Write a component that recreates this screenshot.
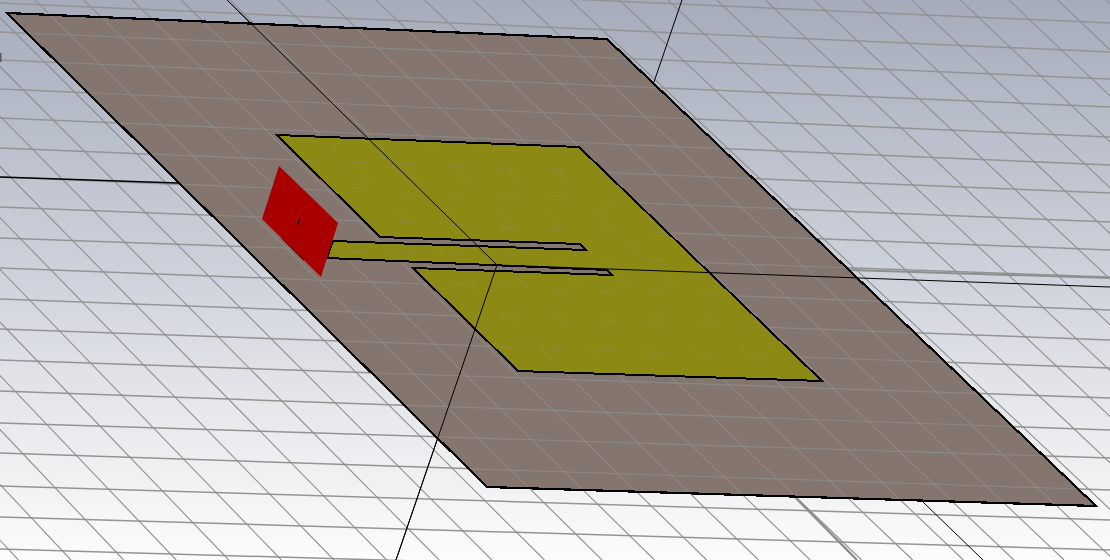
const W = 1110;
const H = 560;

const hAnchors: [number, number][] = [
  [-26, 23], [3, 52], [32, 79], [60, 107], [89, 137], [118, 165], [148, 193], [177, 222], [207, 250], [238, 277],
  [268, 310], [299, 340], [329, 368], [360, 398], [391, 430], [423, 458], [453, 490], [486, 520], [517, 550], [549, 581],
];

const diagonals = Array.from({ length: 44 }, (_, i) => {
  const n = i - 16;
  const x0 = 35 + 48.7 * n - (n < 0 ? 4 : 0);
  const x1 = n < 0 ? 600 + 52.6 * n - 3 : 600 + 52.6 * n - 0.14 * n * n + 2;
  return { n, x0, x1 };
});

const plane = "7,13 607,39 1096,506 487,487";
const patch = "277,135 579,147 822,381 518,371 413,268 612,275 607,270 327,258 333,241 586,250 580,244 380,237";
const port = "279,166 338,223 321,277 262,219";

function Grid({ hColor, dColor, hWidth, dWidth, dash }: { hColor: string; dColor: string; hWidth: number; dWidth: number; dash?: string }) {
  return (
    <g>
      {hAnchors.map(([a, b], i) => (
        <line key={`h${i}`} x1={0} y1={a} x2={W} y2={b} stroke={hColor} strokeWidth={hWidth} strokeDasharray={dash} />
      ))}
      {diagonals.map((d) => (
        <line key={`d${d.n}`} x1={d.x0} y1={0} x2={d.x1} y2={H} stroke={dColor} strokeWidth={dWidth} strokeDasharray={dash} />
      ))}
    </g>
  );
}

export default function App() {
  return (
    <div className="w-[1110px] h-[560px] overflow-hidden bg-[linear-gradient(180deg,#a6acbb_0%,#cfd3dd_50%,#e6e7eb_72%,#fcfcfc_100%)]">
      <svg width={W} height={H} viewBox={`0 0 ${W} ${H}`} className="block">
        <defs>
          <clipPath id="planeClip"><polygon points={plane} /></clipPath>
          <clipPath id="patchClip"><polygon points={patch} /></clipPath>
        </defs>

        <Grid hColor="#949492" dColor="#8f8f8f" hWidth={1.5} dWidth={1.1} />
        <line x1={795} y1={497} x2={857} y2={560} stroke="#8c8c8c" strokeWidth={2.4} />
        <line x1={850} y1={270} x2={1110} y2={278} stroke="#8e8e8c" strokeWidth={2} />
        <line x1={0.5} y1={53} x2={0.5} y2={62} stroke="#555a66" strokeWidth={2} />

        <line x1={0} y1={177} x2={178} y2={183} stroke="#000" strokeWidth={1.3} />
        <line x1={227} y1={0} x2={300} y2={72} stroke="#000" strokeWidth={1} />
        <line x1={682} y1={0} x2={654} y2={82} stroke="#000" strokeWidth={1} />
        <line x1={497} y1={265} x2={396} y2={560} stroke="#000" strokeWidth={1} />
        <line x1={923} y1={502} x2={983} y2={560} stroke="#000" strokeWidth={1} />

        <polygon points={plane} fill="#84766e" />
        <g clipPath="url(#planeClip)">
          <Grid hColor="#888a88" dColor="#928f8c" hWidth={1.1} dWidth={1} />
        </g>

        <polygon points={plane} fill="none" stroke="#000" strokeWidth={2.2} shapeRendering="crispEdges" />

        <polygon points={patch} fill="#8c8a14" />
        <g clipPath="url(#patchClip)" opacity={0.3}>
          <Grid hColor="#8b90a0" dColor="#a5a56a" hWidth={1} dWidth={1} dash="16 34" />
        </g>
        <polygon points={patch} fill="none" stroke="#000" strokeWidth={2} shapeRendering="crispEdges" />

        <line x1={227} y1={0} x2={497} y2={265} stroke="#000" strokeWidth={1} />
        <line x1={497} y1={265} x2={1110} y2={287} stroke="#000" strokeWidth={1} />
        <line x1={497} y1={265} x2={396} y2={560} stroke="#000" strokeWidth={1} />

        <line x1={282} y1={238} x2={304} y2={260} stroke="#000" strokeWidth={1.5} />
        <polygon points={port} fill="#a80000" />
        <path d="M299 219 L298 225 M297 224 L299 222" stroke="#000" strokeWidth={1} fill="none" />
      </svg>
    </div>
  );
}
